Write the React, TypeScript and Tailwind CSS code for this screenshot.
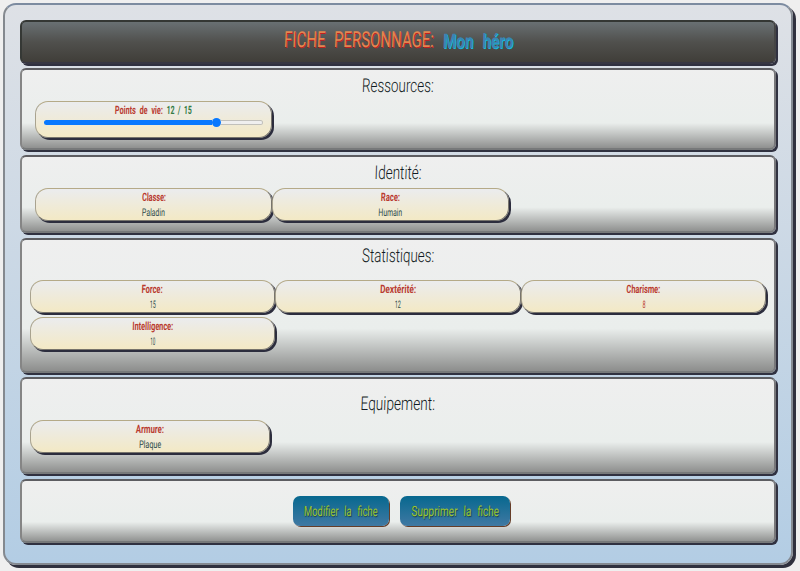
import { useLayoutEffect, useRef, useState, type ReactNode } from 'react';

/** One line of lettering, condensed horizontally to the given width. */
function Fit({ width, className = '', children }: { width: number; className?: string; children: ReactNode }) {
  const ref = useRef<HTMLSpanElement>(null);
  const [scale, setScale] = useState(1);
  useLayoutEffect(() => {
    if (ref.current) setScale(width / ref.current.offsetWidth);
  }, [width]);
  return (
    <span className="flex shrink-0 justify-center" style={{ width }}>
      <span
        ref={ref}
        className={`shrink-0 whitespace-nowrap ${className}`}
        style={{ transform: `scaleX(${scale}) skewX(-3deg)` }}
      >
        {children}
      </span>
    </span>
  );
}

function Panel({ className, children }: { className: string; children: ReactNode }) {
  return (
    <section
      className={`w-[756px] shrink-0 rounded-[6px] border-2 border-t-[#5d5d61] border-r-[#77777a] border-b-[#77797a] border-l-[#858585] bg-[linear-gradient(#efefef,#eaeeec_67%,#888988)] bg-origin-border shadow-[2px_2px_0_#303140] ${className}`}
    >
      {children}
    </section>
  );
}

function Heading({ width, children }: { width: number; children: ReactNode }) {
  return (
    <h2 className="flex h-5 justify-center text-[19px] leading-5 font-light text-[#111a22]">
      <Fit width={width}>{children}</Fit>
    </h2>
  );
}

const cardBase =
  'shrink-0 rounded-[13px] border border-t-[#b5aa88] border-r-[#77746c] border-b-[#77746c] border-l-[#a9a38f] bg-[linear-gradient(#ebecee,#f3e9c5)] shadow-[2px_2px_0_#2c2d3d]';

interface FieldProps {
  label: string;
  labelWidth: number;
  value: string;
  valueWidth: number;
  className: string;
  valueClass?: string;
}

function Field({ label, labelWidth, value, valueWidth, className, valueClass = 'text-[#2c4a4a]' }: FieldProps) {
  return (
    <div className={`h-[33px] pt-px ${cardBase} ${className}`}>
      <div className="flex h-[15px] justify-center text-[11.5px] leading-[15px] font-bold text-[#b93a30]">
        <Fit width={labelWidth}>{label}</Fit>
      </div>
      <div className={`flex h-[15px] justify-center text-[10.5px] leading-[15px] ${valueClass}`}>
        <Fit width={valueWidth}>{value}</Fit>
      </div>
    </div>
  );
}

function ActionButton({ width, className, children }: { width: number; className: string; children: ReactNode }) {
  return (
    <button
      className={`flex h-[30px] items-center justify-center rounded-[7px] bg-[linear-gradient(#07688f,#4079a3)] text-[14px] leading-[30px] text-[#9bc52b] shadow-[1px_1px_0_#653d28] [text-shadow:1px_1px_1px_#173b50] [word-spacing:5px] ${className}`}
    >
      <Fit width={width}>{children}</Fit>
    </button>
  );
}

export default function App() {
  return (
    <div className="h-[571px] w-[800px] overflow-hidden bg-[#efefef] pt-[3px] pl-[3px] font-['Roboto','Liberation_Sans',sans-serif]">
      <main className="flex h-[562px] w-[790px] flex-col rounded-[13px] border-2 border-t-[#7c8ba0] border-r-[#858b93] border-b-[#858a91] border-l-[#84898f] bg-[linear-gradient(#dee1e6,#b3cde4)] pt-[15px] pl-[15px] shadow-[3px_3px_0_#30313e]">
        <header className="flex h-11 w-[756px] shrink-0 rounded-[6px] border-2 border-t-[#343734] border-r-[#454545] border-b-[#373743] border-l-[#353835] bg-[linear-gradient(#697073,#50504d_50%,#403e39)] pl-[262px] shadow-[2px_2px_0_#303140]">
          <h1 className="flex gap-[9px] text-[22px] leading-[36px] [word-spacing:7px]">
            <Fit width={150} className="text-[#e28650] [text-shadow:1px_1px_0_#c02020]">
              FICHE PERSONNAGE:
            </Fit>
            <Fit width={70} className="text-[20px] leading-[38px] font-bold text-[#3885b3] [text-shadow:1px_1px_0_#16b9dc]">
              Mon héro
            </Fit>
          </h1>
        </header>

        <Panel className="mt-1 h-[82px] pt-[6px]">
          <Heading width={72}>Ressources:</Heading>
          <div className={`mt-[5px] ml-[13px] h-[37px] w-[237px] ${cardBase}`}>
            <div className="flex h-4 justify-center gap-1 text-[11.5px] leading-4 font-bold [word-spacing:3px]">
              <Fit width={48} className="text-[#b93a30]">
                Points de vie:
              </Fit>
              <Fit width={25} className="text-[#347b45]">
                12 / 15
              </Fit>
            </div>
            <div className="mx-2 flex h-[9px] items-center">
              <div className="h-[5px] w-[168px] rounded-l-full bg-[#0878ff]" />
              <div className="size-[9px] shrink-0 rounded-full bg-[#0878ff]" />
              <div className="h-[5px] flex-1 rounded-r-full border border-l-0 border-[#c1c0bb] bg-[#efefef]" />
            </div>
          </div>
        </Panel>

        <Panel className="mt-[5px] h-[78px] pt-[6px]">
          <Heading width={47}>Identité:</Heading>
          <div className="mt-[5px] flex pl-[13px]">
            <Field label="Classe:" labelWidth={24} value="Paladin" valueWidth={23} className="w-[237px]" />
            <Field label="Race:" labelWidth={19} value="Humain" valueWidth={24} className="w-[237px]" />
          </div>
        </Panel>

        <Panel className="mt-[5px] h-[135px] pt-[6px]">
          <Heading width={72}>Statistiques:</Heading>
          <div className="mt-[14px] flex w-[740px] flex-wrap gap-y-[4px] pl-2">
            <Field label="Force:" labelWidth={21} value="15" valueWidth={6} className="w-[245px]" />
            <Field label="Dextérité:" labelWidth={36} value="12" valueWidth={6} className="w-[246px]" />
            <Field
              label="Charisme:"
              labelWidth={34}
              value="8"
              valueWidth={3}
              valueClass="text-[#b93a30]"
              className="-mr-2 w-[245px]"
            />
            <Field label="Intelligence:" labelWidth={41} value="10" valueWidth={5} className="w-[245px]" />
          </div>
        </Panel>

        <Panel className="mt-1 h-[97px] pt-[15px]">
          <Heading width={75}>Equipement:</Heading>
          <div className="mt-[6px] flex pl-2">
            <Field label="Armure:" labelWidth={28} value="Plaque" valueWidth={22} className="w-[240px]" />
          </div>
        </Panel>

        <Panel className="mt-[5px] flex h-[64px] gap-[11px] pt-[15px] pl-[271px]">
          <ActionButton width={74} className="w-[96px]">
            Modifier la fiche
          </ActionButton>
          <ActionButton width={88} className="w-[110px]">
            Supprimer la fiche
          </ActionButton>
        </Panel>
      </main>
    </div>
  );
}
